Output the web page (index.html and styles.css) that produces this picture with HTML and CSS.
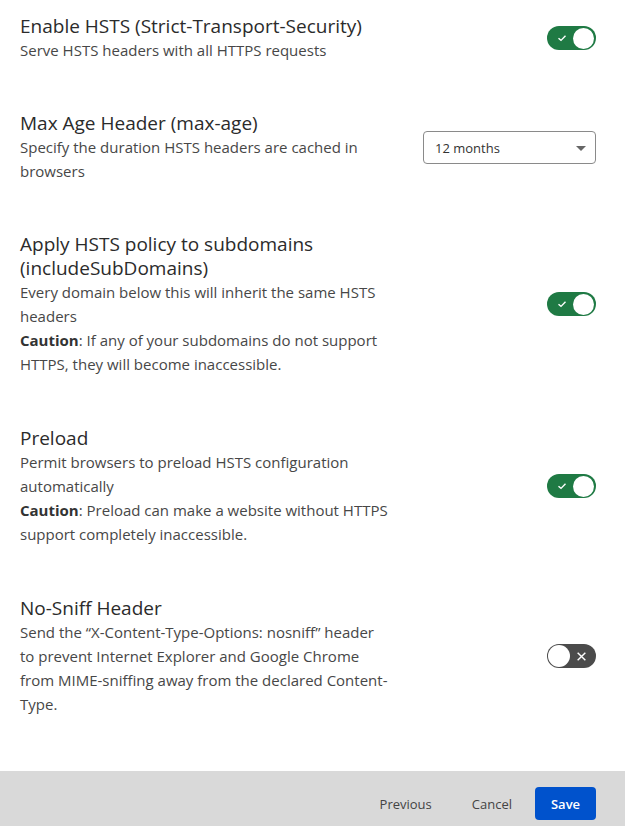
FILE: index.html
```html
<!DOCTYPE html>
<html lang="en">
<head>
<meta charset="utf-8">
<title>HSTS settings</title>
<link rel="stylesheet" href="styles.css">
</head>
<body>
<div class="page">
  <main class="settings">
    <section class="row">
      <div class="text">
        <h2 class="title">Enable HSTS (Strict-Transport-Security)</h2>
        <p class="desc">Serve HSTS headers with all HTTPS requests</p>
      </div>
      <div class="control">
        <span class="toggle on"><svg class="mark" viewBox="0 0 10 10" width="10" height="10"><path d="M1.5 5.2 L4 7.4 L8.5 2.8" fill="none" stroke="#fff" stroke-width="1.4"/></svg><span class="knob"></span></span>
      </div>
    </section>

    <section class="row">
      <div class="text">
        <h2 class="title">Max Age Header (max-age)</h2>
        <p class="desc">Specify the duration HSTS headers are cached in browsers</p>
      </div>
      <div class="control">
        <div class="select"><span>12 months</span><span class="caret"></span></div>
      </div>
    </section>

    <section class="row">
      <div class="text">
        <h2 class="title">Apply HSTS policy to subdomains (includeSubDomains)</h2>
        <p class="desc">Every domain below this will inherit the same HSTS headers</p>
        <p class="desc"><strong>Caution</strong>: If any of your subdomains do not support HTTPS, they will become inaccessible.</p>
      </div>
      <div class="control">
        <span class="toggle on"><svg class="mark" viewBox="0 0 10 10" width="10" height="10"><path d="M1.5 5.2 L4 7.4 L8.5 2.8" fill="none" stroke="#fff" stroke-width="1.4"/></svg><span class="knob"></span></span>
      </div>
    </section>

    <section class="row">
      <div class="text">
        <h2 class="title">Preload</h2>
        <p class="desc">Permit browsers to preload HSTS configuration automatically</p>
        <p class="desc"><strong>Caution</strong>: Preload can make a website without HTTPS support completely inaccessible.</p>
      </div>
      <div class="control">
        <span class="toggle on"><svg class="mark" viewBox="0 0 10 10" width="10" height="10"><path d="M1.5 5.2 L4 7.4 L8.5 2.8" fill="none" stroke="#fff" stroke-width="1.4"/></svg><span class="knob"></span></span>
      </div>
    </section>

    <section class="row">
      <div class="text">
        <h2 class="title">No-Sniff Header</h2>
        <p class="desc nowrap">Send the “X-Content-Type-Options: nosniff” header<br>to prevent Internet Explorer and Google Chrome<br>from MIME-sniffing away from the declared Content-<br>Type.</p>
      </div>
      <div class="control">
        <span class="toggle off"><span class="knob"></span><svg class="mark" viewBox="0 0 10 10" width="11" height="11"><path d="M1.5 1.5 L8.5 8.5 M8.5 1.5 L1.5 8.5" fill="none" stroke="#fff" stroke-width="1.3"/></svg></span>
      </div>
    </section>
  </main>

  <footer class="footer">
    <button class="btn link">Previous</button>
    <button class="btn link">Cancel</button>
    <button class="btn primary">Save</button>
  </footer>
</div>
</body>
</html>
```

FILE: styles.css
```css
* { box-sizing: border-box; }
html, body { margin: 0; padding: 0; background: #fff; }
body {
  font-family: "Open Sans", "Noto Sans", sans-serif;
  color: #333;
}
.page {
  width: 625px;
  height: 826px;
  display: flex;
  flex-direction: column;
}
.settings {
  flex: 1;
  padding: 14px 29px 0 20px;
  display: flex;
  flex-direction: column;
  gap: 49px;
}
.row {
  display: flex;
  align-items: center;
  justify-content: space-between;
}
.row:nth-child(4), .row:nth-child(5) { margin-top: 1px; }
.text { width: 370px; }
.title {
  margin: 0;
  font-size: 19px;
  font-weight: 500;
  line-height: 24px;
  color: #2b2b2b;
}
.desc {
  margin: 0;
  font-size: 15px;
  line-height: 24px;
  color: #474747;
}
.desc.nowrap { white-space: nowrap; }
.desc strong { font-weight: 700; color: #333; }
.control { display: flex; align-items: center; }

.toggle {
  width: 49px;
  height: 24px;
  border-radius: 12px;
  display: flex;
  align-items: center;
  justify-content: space-between;
}
.toggle.on { background: #1f7a44; padding: 0 2px 0 10px; }
.toggle.off { background: #4b4b4b; padding: 0 9px 0 1px; }
.toggle .knob {
  width: 21px;
  height: 21px;
  border-radius: 50%;
  background: #fff;
}
.toggle.off .knob { width: 22px; height: 22px; }
.mark { display: block; }

.select {
  width: 173px;
  height: 33px;
  border: 1px solid #8a8a8a;
  border-radius: 4px;
  display: flex;
  align-items: center;
  justify-content: space-between;
  padding: 2px 9px 0 11px;
  font-size: 13px;
  color: #333;
}
.caret {
  width: 0; height: 0;
  border-left: 5px solid transparent;
  border-right: 5px solid transparent;
  border-top: 5px solid #666;
}

.footer {
  height: 55px;
  background: #d9d9d9;
  display: flex;
  align-items: flex-start;
  justify-content: flex-end;
  padding: 16px 29px 0 0;
}
.btn {
  font-family: inherit;
  font-size: 13px;
  border: 0;
  background: none;
  cursor: pointer;
  height: 33px;
  border-radius: 4px;
}
.btn.link { color: #444; padding: 0 20px; }
.btn.primary {
  background: #0052cc;
  color: #fff;
  width: 61px;
  margin-left: 3px;
  font-weight: 600;
}
```
